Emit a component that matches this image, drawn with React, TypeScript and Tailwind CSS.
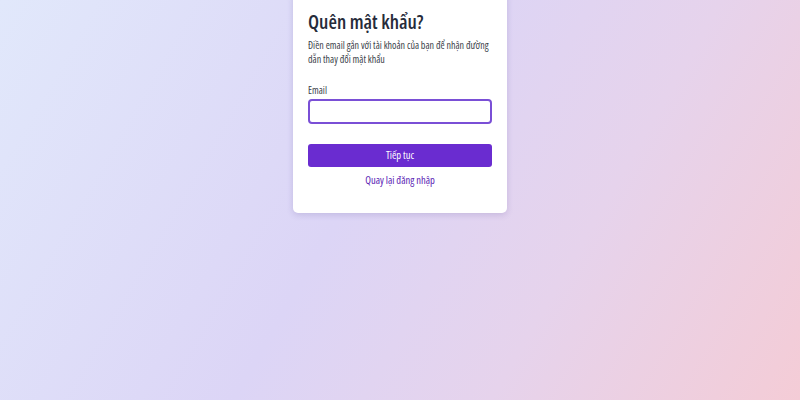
export default function App() {
  return (
    <div
      className="min-h-screen w-full flex justify-center items-start font-stretch-condensed bg-[linear-gradient(120deg,#e1e8fb_0%,#dcd5f6_45%,#e6d3ec_70%,#f4ccd6_100%)]"
      style={{ fontFamily: '"Open Sans", "Noto Sans", sans-serif' }}
    >
      <div className="w-[214px] -mt-2 bg-white rounded-[5px] shadow-[0_2px_6px_rgba(80,60,140,0.18)] px-[15px] pt-[17px] pb-[26px]">
        <h1 className="text-[19.5px] leading-[26px] font-semibold text-[#262b3a]">
          Quên mật khẩu?
        </h1>
        <p className="mt-[3px] text-[10px] leading-[14px] text-[#3b3f4a]">
          Điền email gắn với tài khoản của bạn để nhận đường dẫn thay đổi mật khẩu
        </p>
        <label className="block mt-[17px] text-[10px] leading-[14px] text-[#3b3f4a]">Email</label>
        <input
          type="email"
          className="mt-[2px] block w-full h-[25px] rounded-[4px] border-2 border-[#7a4fd6] outline-none bg-white"
        />
        <button className="mt-[20px] block w-full h-[23px] rounded-[3px] bg-[#6a2cd0] text-white text-[10.5px] font-medium">
          Tiếp tục
        </button>
        <div className="mt-[4px] text-center leading-[14px]">
          <a className="text-[10.5px] font-medium text-[#5a23b4]">Quay lại đăng nhập</a>
        </div>
      </div>
    </div>
  );
}
